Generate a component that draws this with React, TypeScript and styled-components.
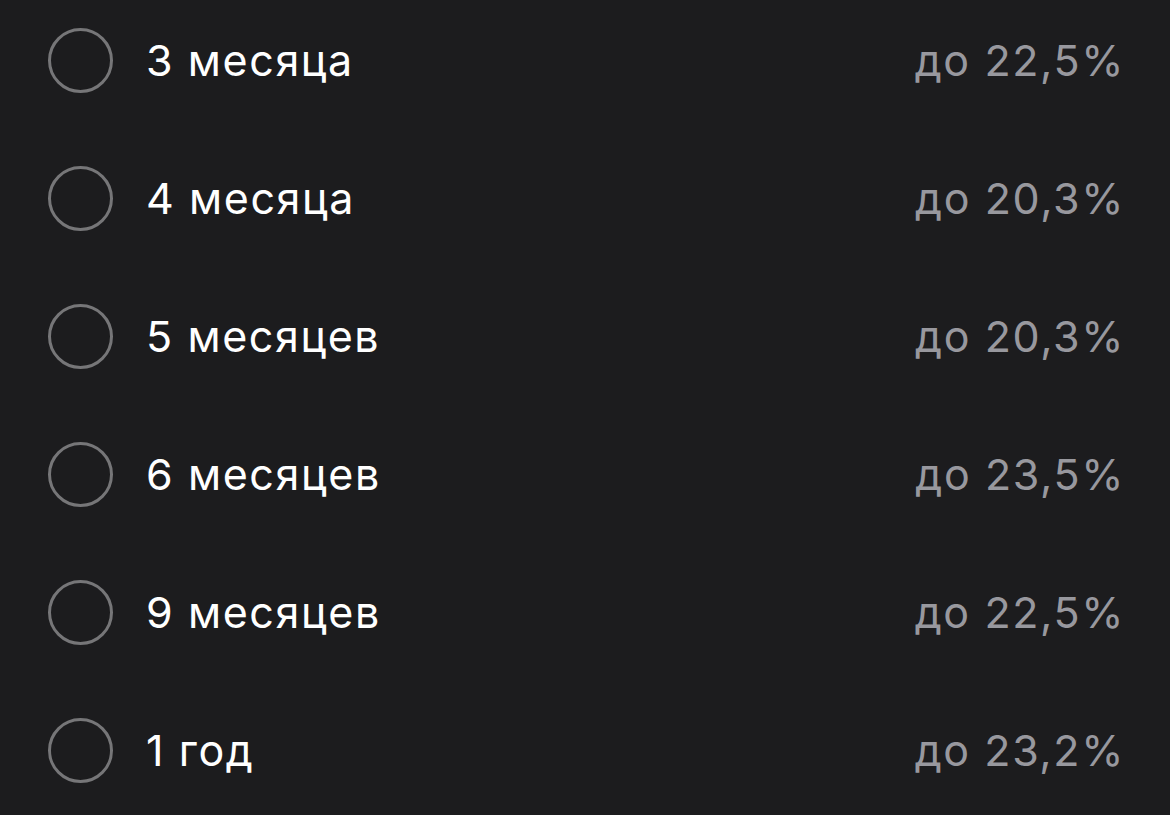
import React from "react";
import styled, { createGlobalStyle } from "styled-components";

const Global = createGlobalStyle`
  html, body { margin: 0; padding: 0; background: #1c1c1e; }
  body { font-family: Inter, "Noto Sans", "Liberation Sans", sans-serif; -webkit-font-smoothing: antialiased; }
`;

const Page = styled.div`
  width: 1170px;
  height: 815px;
  background: #1c1c1e;
  overflow: hidden;
`;

const List = styled.ul`
  list-style: none;
  margin: -9px 0 0 0;
  padding: 0 45px 0 48px;
`;

const Row = styled.li`
  height: 138px;
  display: flex;
  align-items: center;
`;

const Radio = styled.span`
  width: 65px;
  height: 65px;
  box-sizing: border-box;
  border: 3px solid #767678;
  border-radius: 50%;
  flex-shrink: 0;
`;

const Label = styled.span`
  margin-left: 33px;
  flex: 1;
  color: #ffffff;
  font-size: 43px;
  letter-spacing: 1.6px;
`;

const Rate = styled.span`
  color: #98989e;
  font-size: 43px;
  letter-spacing: 1.6px;
`;

const items = [
  { label: "3 месяца", rate: "до 22,5%" },
  { label: "4 месяца", rate: "до 20,3%" },
  { label: "5 месяцев", rate: "до 20,3%" },
  { label: "6 месяцев", rate: "до 23,5%" },
  { label: "9 месяцев", rate: "до 22,5%" },
  { label: "1 год", rate: "до 23,2%" },
];

export default function App() {
  return (
    <Page>
      <Global />
      <List>
        {items.map((it) => (
          <Row key={it.label}>
            <Radio />
            <Label>{it.label}</Label>
            <Rate>{it.rate}</Rate>
          </Row>
        ))}
      </List>
    </Page>
  );
}
